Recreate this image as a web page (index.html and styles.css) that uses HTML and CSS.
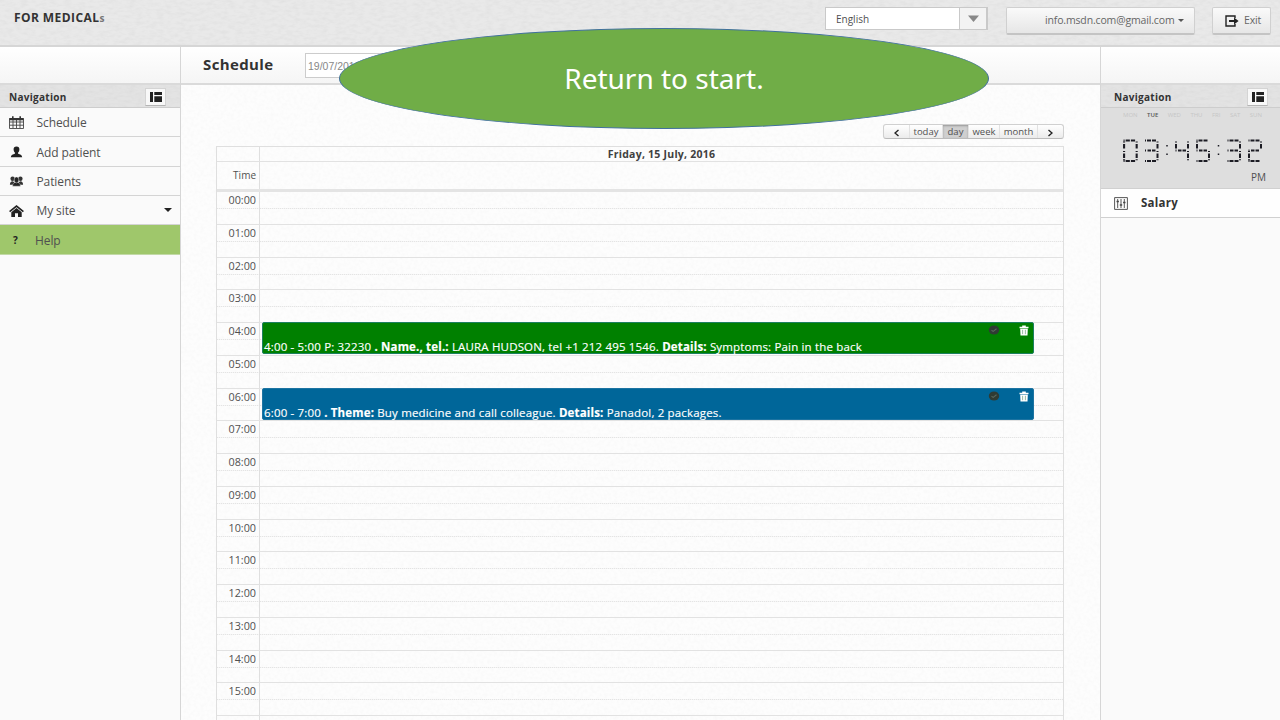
FILE: index.html
```html
<!DOCTYPE html>
<html lang="en">
<head>
<meta charset="utf-8">
<title>Schedule</title>
<link rel="stylesheet" href="styles.css">
</head>
<body>
<svg class="defs" width="0" height="0" aria-hidden="true">
  <defs>
    <filter id="paper" x="0" y="0" width="100%" height="100%">
      <feTurbulence type="fractalNoise" baseFrequency="0.14 0.32" numOctaves="3" seed="4"/>
      <feColorMatrix values="0 0 0 0 0.5  0 0 0 0 0.5  0 0 0 0 0.5  0.32 0 0 0 -0.12"/>
    </filter>
    <filter id="grain" x="0" y="0" width="100%" height="100%">
      <feTurbulence type="fractalNoise" baseFrequency="0.3" numOctaves="2" seed="7"/>
      <feColorMatrix values="0 0 0 0 0.5  0 0 0 0 0.5  0 0 0 0 0.5  0.12 0 0 0 -0.045"/>
    </filter>
    <symbol id="layout" viewBox="0 0 12 10"><path fill="#222" d="M0 0h3v10H0zM4.300 0H12v3H4.300zM4.300 4.200H12V10H4.300z"/></symbol>
    <symbol id="done" viewBox="0 0 12 10"><ellipse cx="6" cy="5" rx="5.200" ry="4.600" fill="#2f3b33"/><path d="M3.500 5.200l1.700 1.200 3.300-2.600" fill="none" stroke="#59665c" stroke-width="1.100"/></symbol>
    <symbol id="trash" viewBox="0 0 10 11"><path fill="#fff" d="M.5 1.800h2.700V.6h3.600v1.200h2.700v1.400h-9zM1.200 3.700h7.600l-.3 6.800H1.500z"/><path d="M3.600 4.800v4.400M6.400 4.800v4.400" stroke="#8db69a" stroke-width=".9"/></symbol>
    <path id="sa" d="M1 1.500h1M3 1.500h4M8 1.500h4"/>
    <path id="sg" d="M1 11.500h1M3.500 11.500h3.500M8 11.500h3.500"/>
    <path id="sd" d="M1 22h1M3 22h4M8 22h4"/>
    <path id="sf" d="M1.500 2.500v1M1.500 5v4.500"/><path id="se" d="M1.500 12v1M1.500 14.500v4.500M1.500 20.200v1"/>
    <path id="sb" d="M13.500 2.500v1M13.500 5v4.500"/><path id="sc" d="M13.500 12v1M13.500 14.500v4.500M13.500 20.200v1"/>
  </defs>
</svg>
<div class="app">
  <header class="top">
    <svg class="texture"><rect width="100%" height="100%" filter="url(#paper)"/></svg>
    <div class="brand">FOR MEDICAL<span>s</span></div>
    <div class="lang"><span>English</span><i><svg width="11" height="7"><path d="M0 .5h11L5.500 7z" fill="#888"/></svg></i></div>
    <div class="btn account"><span>info.msdn.com@gmail.com</span><svg width="6" height="3"><path d="M0 0h6L3 3z" fill="#555"/></svg></div>
    <div class="btn exit"><svg width="14" height="12" viewBox="0 0 14 12"><path d="M10 3V1H1v10h9V9" fill="none" stroke="#222" stroke-width="1.400"/><path d="M4 5h5V2.600L13.600 6 9 9.400V7H4z" fill="#222"/></svg><span>Exit</span></div>
  </header>
  <div class="columns">
    <aside class="side left">
      <div class="bar"></div>
      <div class="navhead"><svg class="texture"><rect width="100%" height="100%" filter="url(#paper)"/></svg><b>Navigation</b><span class="toggle"><svg width="12" height="10"><use href="#layout"/></svg></span></div>
      <nav>
        <a><svg class="ic" width="15" height="13" viewBox="0 0 15 13"><path d="M.5 2.500h14v10H.5zM.5 6h14M.5 9.200h14M4 4v8M7.500 4v8M11 4v8" fill="none" stroke="#444" stroke-width=".9"/><path d="M.5 2h14v2.200H.5zM3 .3h1.600v2H3zM10.400.3H12v2h-1.600z" fill="#333"/></svg><span>Schedule</span></a>
        <a><svg class="ic" width="15" height="12" viewBox="0 0 15 12"><path d="M7.500.5c2 0 3 1.200 2.900 3-.1 1.600-.6 2.500-1.300 3.100v1.200c1.900.6 3.900 1.200 4.100 3.400H1.800c.2-2.200 2.200-2.800 4.100-3.400V6.600C5.200 6 4.700 5.100 4.600 3.500 4.500 1.700 5.500.5 7.500.5z" fill="#222"/></svg><span>Add patient</span></a>
        <a><svg class="ic" width="15" height="12" viewBox="0 0 15 12"><g fill="#333"><circle cx="3.600" cy="3.800" r="2.200"/><circle cx="11.400" cy="3.800" r="2.200"/><path d="M.9 9.800c0-2.200 1-3.600 2.700-3.600L5 7v2.800zM14.100 9.800c0-2.200-1-3.600-2.700-3.600L10 7v2.800z"/></g><g fill="#222" stroke="#eee" stroke-width=".4"><path d="M3.600 11.200c0-2.400 1.200-3.900 3.900-3.900s3.900 1.500 3.900 3.900z"/><ellipse cx="7.500" cy="4.900" rx="2.300" ry="3"/></g></svg><span>Patients</span></a>
        <a><svg class="ic" width="15" height="12" viewBox="0 0 15 12"><path d="M.6 6.600l6.900-5.500 6.900 5.500" fill="none" stroke="#222" stroke-width="1.700"/><path d="M2.300 7.200l5.200-4.100 5.200 4.100V12H9V8.300H6V12H2.300z" fill="#222"/></svg><span>My site</span><svg class="caret" width="8" height="4"><path d="M0 0h8L4 4z" fill="#222"/></svg></a>
        <a class="active"><b class="q">?</b><span>Help</span></a>
      </nav>
    </aside>
    <main>
      <svg class="texture"><rect width="100%" height="100%" filter="url(#grain)"/></svg>
      <div class="bar titlebar"><h1>Schedule</h1><div class="date">19/07/2016</div><div class="btn ghost"></div><div class="btn visit"><span>New visit</span></div></div>
      <div class="views">
        <span class="v1"><svg width="5" height="8"><path d="M4.500 1L1 4l3.500 3" fill="none" stroke="#222" stroke-width="1.400"/></svg></span><span class="v2">today</span><span class="v3 on">day</span><span class="v4">week</span><span class="v5">month</span><span class="v6"><svg width="5" height="8"><path d="M.5 1L4 4 .5 7" fill="none" stroke="#222" stroke-width="1.400"/></svg></span>
      </div>
      <section class="calendar">
        <div class="row dayrow"><div class="hour"></div><div class="slot"><b>Friday, 15 July, 2016</b></div></div>
        <div class="row timerow"><div class="hour">Time</div><div class="slot"></div></div>
        <div class="row"><div class="hour">00:00</div><div class="slot"></div></div>
        <div class="row"><div class="hour">01:00</div><div class="slot"></div></div>
        <div class="row"><div class="hour">02:00</div><div class="slot"></div></div>
        <div class="row"><div class="hour">03:00</div><div class="slot"></div></div>
        <div class="row"><div class="hour">04:00</div><div class="slot"><div class="event green"><div class="tools"><svg width="12" height="10"><use href="#done"/></svg><svg width="10" height="11"><use href="#trash"/></svg></div><p>4:00 - 5:00 P: 32230 <b>. Name., tel.:</b> LAURA HUDSON, tel +1 212 495 1546. <b>Details:</b> Symptoms: Pain in the back</p></div></div></div>
        <div class="row"><div class="hour">05:00</div><div class="slot"></div></div>
        <div class="row"><div class="hour">06:00</div><div class="slot"><div class="event blue"><div class="tools"><svg width="12" height="10"><use href="#done"/></svg><svg width="10" height="11"><use href="#trash"/></svg></div><p>6:00 - 7:00 <b>. Theme:</b> Buy medicine and call colleague. <b>Details:</b> Panadol, 2 packages.</p></div></div></div>
        <div class="row"><div class="hour">07:00</div><div class="slot"></div></div>
        <div class="row"><div class="hour">08:00</div><div class="slot"></div></div>
        <div class="row"><div class="hour">09:00</div><div class="slot"></div></div>
        <div class="row"><div class="hour">10:00</div><div class="slot"></div></div>
        <div class="row"><div class="hour">11:00</div><div class="slot"></div></div>
        <div class="row"><div class="hour">12:00</div><div class="slot"></div></div>
        <div class="row"><div class="hour">13:00</div><div class="slot"></div></div>
        <div class="row"><div class="hour">14:00</div><div class="slot"></div></div>
        <div class="row"><div class="hour">15:00</div><div class="slot"></div></div>
        <div class="row"><div class="hour"></div><div class="slot"></div></div>
      </section>
    </main>
    <aside class="side right">
      <div class="bar"></div>
      <div class="navhead"><svg class="texture"><rect width="100%" height="100%" filter="url(#paper)"/></svg><b>Navigation</b><span class="toggle"><svg width="12" height="10"><use href="#layout"/></svg></span></div>
      <div class="clock">
        <div class="days"><span>MON</span><span class="today">TUE</span><span>WED</span><span>THU</span><span>FRI</span><span>SAT</span><span>SUN</span></div>
        <svg class="digits" width="144" height="24" fill="none" stroke="#1c1c24" stroke-width="2">
          <g transform="translate(.5) scale(1.050 1)"><use href="#sa"/><use href="#sb"/><use href="#sc"/><use href="#sd"/><use href="#se"/><use href="#sf"/></g>
          <g transform="translate(22)"><use href="#sa"/><use href="#sb"/><use href="#sc"/><use href="#sd"/><use href="#sg"/></g>
          <g transform="translate(52.500)"><use href="#sf"/><use href="#sg"/><use href="#sb"/><use href="#sc"/></g>
          <g transform="translate(73.500)"><use href="#sa"/><use href="#sf"/><use href="#sg"/><use href="#sc"/><use href="#sd"/></g>
          <g transform="translate(104.500)"><use href="#sa"/><use href="#sb"/><use href="#sc"/><use href="#sd"/><use href="#sg"/></g>
          <g transform="translate(125.500)"><use href="#sa"/><use href="#sb"/><use href="#sg"/><use href="#se"/><use href="#sd"/></g>
          <path d="M45 6v1.500M45 14.500v1.500M96.500 6v1.500M96.500 14.500v1.500" stroke-width="1.500"/>
        </svg>
        <div class="pm">PM</div>
      </div>
      <div class="salary"><svg width="14" height="13" viewBox="0 0 14 13" fill="none" stroke="#444"><path d="M.6.6h12.800v11.800H.6z" stroke-width=".9"/><path d="M3.700 2v9M7 2v9M10.300 2v9" stroke-width=".9"/><path d="M2.500 4.500h2.400M5.800 8h2.400M9.100 5.500h2.400" stroke-width="1.400"/></svg><b>Salary</b></div>
    </aside>
  </div>
  <div class="callout"><span>Return to start.</span></div>
</div>
</body>
</html>
```
FILE: styles.css
```css
* { box-sizing: border-box; }
body { margin: 0; width: 1280px; height: 720px; overflow: hidden; font-family: "Open Sans", sans-serif; font-size: 12px; color: #505050; background: #fbfbfb; }
.defs { position: absolute; }
svg { display: block; flex: none; }
span, b, p, h1 { white-space: nowrap; }
.app { position: relative; display: flex; flex-direction: column; height: 720px; overflow: hidden; }
.texture { position: absolute; inset: 0; width: 100%; height: 100%; }
.top { position: relative; flex: none; display: flex; align-items: flex-start; height: 47px; padding: 7px 9px 0 14px; background: #e9e9e9; border-bottom: 2px solid #d6d6d6; }
.top > div { position: relative; }
.brand { flex: 1; font-weight: 700; font-size: 12px; line-height: 22px; color: #333; letter-spacing: .42px; }
.brand span { font-size: 10px; color: #777; }
.lang { display: flex; align-items: stretch; width: 163px; height: 23px; margin-right: 18px; background: #fff; border: 1px solid #c9c9c9; border-right-width: 2px; font-size: 10px; line-height: 23px; padding-left: 10px; }
.lang span { flex: 1; }
.lang i { width: 27px; display: flex; align-items: center; justify-content: center; border-left: 1px solid #c9c9c9; background: #f3f3f3; }
.btn { display: flex; align-items: center; border: 1px solid #d0d0d0; border-bottom: 2px solid #c4c4c4; border-radius: 2px; background: linear-gradient(#fafafa, #e6e6e6); font-size: 10.500px; color: #666; }
.account { width: 189px; height: 28px; margin-right: 17px; padding-left: 38px; gap: 4px; letter-spacing: -.15px; }
.exit { width: 59px; height: 28px; padding-left: 12px; gap: 5px; letter-spacing: -.2px; }
.account span, .exit span { position: relative; top: -1px; }
.columns { flex: 1; display: flex; min-height: 0; }
.side { flex: none; width: 181px; border-right: 1px solid #d6d6d6; background: #fafafa; }
.right { width: 180px; border-right: 0; border-left: 1px solid #d6d6d6; }
.bar { height: 38px; border-bottom: 2px solid #dadada; background: linear-gradient(#fff, #f5f5f5); }
.navhead { position: relative; display: flex; align-items: center; justify-content: space-between; height: 23px; padding: 1px 14px 0 9px; background: #e3e3e3; border-bottom: 1px solid #cdcdcd; }
.right .navhead { padding: 1px 12px 0 13px; }
.navhead b { position: relative; font-size: 10px; font-weight: 700; color: #333; letter-spacing: .28px; }
.toggle { position: relative; display: flex; align-items: center; justify-content: center; width: 21px; height: 18px; background: #f8f8f8; border: 1px solid #d4d4d4; border-bottom-color: #b4b4b4; }
nav a { display: flex; align-items: center; height: 29.350px; padding: 1px 8px 0 9px; border-bottom: 1px solid #d4d4d4; letter-spacing: -.1px; }
nav a span { flex: 1; }
.ic { margin-right: 12.500px; }
.caret { margin-top: -2px; }
nav a.active { background: #9fc76b; border-color: #c2d9a6; }
.q { width: 26px; padding-left: 4px; font-size: 10px; color: #222; }
main { position: relative; width: 919px; overflow: hidden; background: #fdfdfd; }
main > div, main > section { position: relative; }
.titlebar { display: flex; padding: 6px 0 0 22px; }
h1 { margin: 0; width: 102px; font-size: 15px; line-height: 23px; font-weight: 700; color: #333; letter-spacing: .38px; }
.date { width: 200px; height: 25px; padding-left: 2px; border: 1px solid #ccc; background: #fff; font: 10.500px/24px "Liberation Sans", sans-serif; color: #888; }
.ghost { width: 60px; height: 24px; margin: 1px 5px 0 270px; }
.visit { width: 87px; height: 24px; margin-top: 1px; padding-left: 21px; color: #555; letter-spacing: -.1px; }
.views { display: flex; width: 181px; height: 15px; margin: 39px 0 0 702px; border: 1px solid #d0d0d0; border-bottom-color: #bbb; border-radius: 3px; background: linear-gradient(#fff, #ebebeb); font-size: 9.500px; line-height: 13px; color: #505050; }
.views span { display: flex; align-items: center; justify-content: center; border-right: 1px solid #e2e2e2; }
.views .v1 { width: 26px; } .views .v2 { width: 33px; } .views .v3 { width: 26px; } .views .v4 { width: 31px; } .views .v5 { width: 38px; } .views .v6 { width: 25px; border: 0; }
.views svg { margin-top: 2px; }
.views .on { background: #cfcfcf; box-shadow: inset 0 1px 2px #999; }
.calendar { width: 848px; margin: 7px 0 0 35px; border: 1px solid #dfdfdf; border-width: 1px 1px 0; }
.row { display: flex; height: 32.780px; border-bottom: 1px solid #e2e2e2; }
.hour { width: 43px; flex: none; border-right: 1px solid #dfdfdf; padding-right: 3px; text-align: right; font-size: 10.800px; line-height: 15px; background: repeating-linear-gradient(90deg, #e4e4e4 0 1px, #f5f5f5 1px 2px) 0 16px / 100% 1px no-repeat; }
.slot { position: relative; flex: 1; background: repeating-linear-gradient(90deg, #e4e4e4 0 1px, #f5f5f5 1px 2px) 0 16px / 100% 1px no-repeat; }
.dayrow { height: 15px; }
.dayrow .hour, .dayrow .slot, .timerow .hour, .timerow .slot { background: none; }
.dayrow .slot { text-align: center; line-height: 14px; font-size: 10.500px; color: #404040; }
.dayrow b { font-weight: 700; letter-spacing: .24px; }
.timerow { height: 30px; border-bottom: 3px solid #e4e4e4; }
.timerow .hour { line-height: 26px; font-size: 10px; }
.event { position: absolute; left: 2px; top: -1px; width: 772px; height: 32px; border-radius: 2px; color: #fff; z-index: 1; }
.green { background: #008000; border: 1px solid #1c8060; }
.blue { background: #006699; border: 1px solid #1d74a2; }
.tools { display: flex; justify-content: flex-end; gap: 19px; padding: 2px 4px 0 0; height: 15px; }
.event p { margin: 0; padding-left: 1px; font-size: 11.500px; line-height: 17px; font-weight: 500; letter-spacing: .165px; -webkit-text-stroke: .15px #fff; }
.event b { font-weight: 700; }
.clock { height: 81px; background: #dedede; border-bottom: 1px solid #d0d0d0; }
.days { display: flex; justify-content: space-between; padding: 3px 18px 0 22px; font-size: 6px; line-height: 8px; color: #c6c6c6; }
.days .today { color: #555; font-weight: 600; }
.digits { margin: 20px 0 0 21px; }
.pm { text-align: right; padding: 7px 14px 0 0; font-size: 10px; line-height: 14px; }
.salary { display: flex; align-items: center; gap: 13px; height: 29px; padding: 0 0 1px 13px; background: #fefefe; border-bottom: 1px solid #d0d0d0; }
.salary svg { margin-top: 2px; }
.salary b { font-size: 11.500px; font-weight: 700; color: #333; line-height: 14px; letter-spacing: .25px; }
.callout { position: absolute; left: 339px; top: 28px; width: 650px; height: 101px; border: 1px solid #41719c; border-radius: 50%; background: #70ad47; display: flex; justify-content: center; z-index: 5; }
.callout span { color: #fff; font-family: "Noto Sans", "Open Sans", sans-serif; font-size: 28px; line-height: 99px; }
```
